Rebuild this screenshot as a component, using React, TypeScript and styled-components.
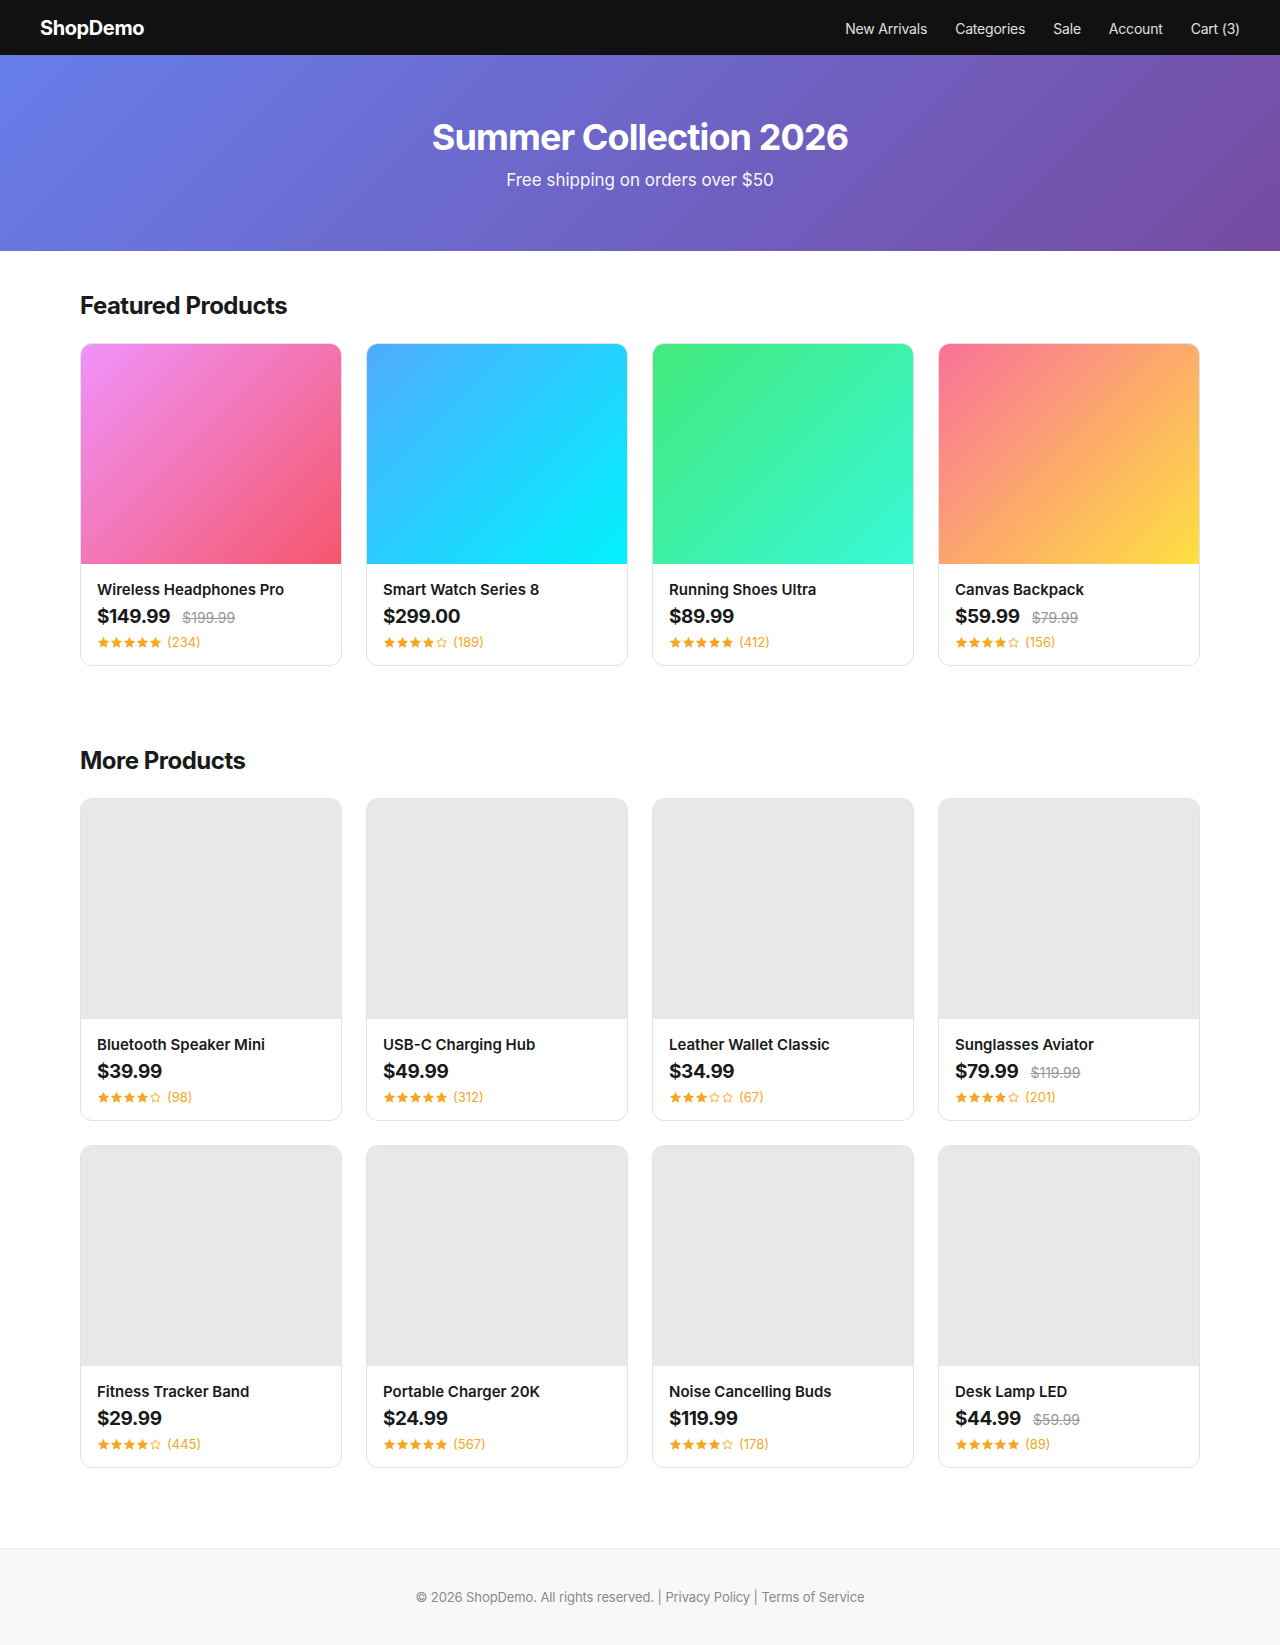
import React from 'react'
import styled, { createGlobalStyle } from 'styled-components'

const GlobalStyle = createGlobalStyle`
  * {
    box-sizing: border-box;
  }
  body {
    margin: 0;
    font-family: Inter, 'Noto Sans', 'DejaVu Sans', sans-serif;
    color: #1a1a1a;
    background: #ffffff;
  }
`

interface Product {
  name: string
  price: string
  oldPrice?: string
  rating: number
  reviews: number
  gradient?: string
}

const featured: Product[] = [
  {
    name: 'Wireless Headphones Pro',
    price: '$149.99',
    oldPrice: '$199.99',
    rating: 5,
    reviews: 234,
    gradient: 'linear-gradient(135deg, #f093fb 0%, #f5576c 100%)',
  },
  {
    name: 'Smart Watch Series 8',
    price: '$299.00',
    rating: 4,
    reviews: 189,
    gradient: 'linear-gradient(135deg, #4facfe 0%, #00f2fe 100%)',
  },
  {
    name: 'Running Shoes Ultra',
    price: '$89.99',
    rating: 5,
    reviews: 412,
    gradient: 'linear-gradient(135deg, #43e97b 0%, #38f9d7 100%)',
  },
  {
    name: 'Canvas Backpack',
    price: '$59.99',
    oldPrice: '$79.99',
    rating: 4,
    reviews: 156,
    gradient: 'linear-gradient(135deg, #fa709a 0%, #fee140 100%)',
  },
]

const more: Product[] = [
  { name: 'Bluetooth Speaker Mini', price: '$39.99', rating: 4, reviews: 98 },
  { name: 'USB-C Charging Hub', price: '$49.99', rating: 5, reviews: 312 },
  { name: 'Leather Wallet Classic', price: '$34.99', rating: 3, reviews: 67 },
  { name: 'Sunglasses Aviator', price: '$79.99', oldPrice: '$119.99', rating: 4, reviews: 201 },
  { name: 'Fitness Tracker Band', price: '$29.99', rating: 4, reviews: 445 },
  { name: 'Portable Charger 20K', price: '$24.99', rating: 5, reviews: 567 },
  { name: 'Noise Cancelling Buds', price: '$119.99', rating: 4, reviews: 178 },
  { name: 'Desk Lamp LED', price: '$44.99', oldPrice: '$59.99', rating: 5, reviews: 89 },
]

const STAR_COLOR = '#f5a623'

const Header = styled.header`
  background: #111111;
  padding: 16px 40px 15px;
  display: flex;
  align-items: center;
  justify-content: space-between;
`

const Logo = styled.div`
  color: #ffffff;
  font-size: 20px;
  font-weight: 700;
  line-height: 24px;
  letter-spacing: -0.4px;
`

const Nav = styled.nav`
  display: flex;
  gap: 28px;
  padding-top: 1px;
`

const NavLink = styled.a`
  color: #e0e0e0;
  font-size: 14px;
  letter-spacing: -0.2px;
  text-decoration: none;
`

const Hero = styled.section`
  background: linear-gradient(135deg, #667eea 0%, #764ba2 100%);
  padding: 61px 20px 58px;
  text-align: center;
  color: #ffffff;
`

const HeroTitle = styled.h1`
  margin: 0 0 8px;
  font-size: 36px;
  line-height: 1.2;
  font-weight: 700;
  letter-spacing: -0.9px;
`

const HeroSubtitle = styled.p`
  margin: 0;
  font-size: 17px;
  line-height: 26px;
  opacity: 0.95;
`

const Main = styled.main`
  max-width: 1200px;
  margin: 0 auto;
  padding: 0 40px 40px;
`

const Section = styled.section`
  padding: 40px 0;
`

const SectionTitle = styled.h2`
  margin: 0 0 22px;
  font-size: 24px;
  line-height: 30px;
  font-weight: 700;
  letter-spacing: -0.5px;
  color: #1a1a1a;
`

const Grid = styled.div`
  display: grid;
  grid-template-columns: repeat(4, 1fr);
  gap: 24px;
`

const Card = styled.div`
  border: 1px solid #e3e3e3;
  border-radius: 12px;
  overflow: hidden;
  background: #ffffff;
`

const CardImage = styled.div<{ $bg?: string }>`
  height: 220px;
  background: ${(p) => p.$bg || '#e8e8e8'};
`

const CardBody = styled.div`
  padding: 17px 16px 15px;
`

const ProductName = styled.div`
  font-size: 15px;
  font-weight: 600;
  line-height: 18px;
  color: #1a1a1a;
  margin-bottom: 6px;
`

const PriceRow = styled.div`
  display: flex;
  align-items: baseline;
  gap: 12px;
  height: 24px;
  line-height: 24px;
  margin-bottom: 5px;
`

const Price = styled.span`
  font-size: 19px;
  font-weight: 700;
  letter-spacing: -0.4px;
  color: #1a1a1a;
`

const OldPrice = styled.span`
  font-size: 14px;
  color: #999999;
  text-decoration: line-through;
`

const Rating = styled.div`
  display: flex;
  align-items: center;
  height: 16px;
  font-size: 13px;
  line-height: 16px;
  color: ${STAR_COLOR};
`

const Stars = styled.span`
  display: flex;
  align-items: center;
  margin-right: 5px;
`

const StarBox = styled.span`
  display: flex;
  width: 13px;
  height: 13px;
  align-items: center;
  justify-content: center;
`

const Footer = styled.footer`
  background: #f8f8f8;
  border-top: 1px solid #eeeeee;
  padding: 40px 20px;
  text-align: center;
  font-size: 13px;
  line-height: 17px;
  letter-spacing: -0.1px;
  color: #888888;
`

const FooterLink = styled.a`
  color: #888888;
  text-decoration: none;
`

const STAR_POINTS = '12,1.5 15.2,8.1 22.5,9.1 17.2,14.2 18.5,21.5 12,18 5.5,21.5 6.8,14.2 1.5,9.1 8.8,8.1'

const Star: React.FC<{ filled: boolean }> = ({ filled }) => (
  <StarBox>
    {filled ? (
      <svg width="13" height="13" viewBox="0 0 24 24">
        <polygon points={STAR_POINTS} fill={STAR_COLOR} />
      </svg>
    ) : (
      <svg width="11" height="11" viewBox="0 0 24 24">
        <polygon points={STAR_POINTS} fill="none" stroke={STAR_COLOR} strokeWidth="2" strokeLinejoin="round" />
      </svg>
    )}
  </StarBox>
)

const ProductCard: React.FC<{ product: Product }> = ({ product }) => (
  <Card>
    <CardImage $bg={product.gradient} />
    <CardBody>
      <ProductName>{product.name}</ProductName>
      <PriceRow>
        <Price>{product.price}</Price>
        {product.oldPrice && <OldPrice>{product.oldPrice}</OldPrice>}
      </PriceRow>
      <Rating>
        <Stars>
          {[0, 1, 2, 3, 4].map((i) => (
            <Star key={i} filled={i < product.rating} />
          ))}
        </Stars>
        ({product.reviews})
      </Rating>
    </CardBody>
  </Card>
)

export default function App() {
  return (
    <>
      <GlobalStyle />
      <Header>
        <Logo>ShopDemo</Logo>
        <Nav>
          <NavLink href="#">New Arrivals</NavLink>
          <NavLink href="#">Categories</NavLink>
          <NavLink href="#">Sale</NavLink>
          <NavLink href="#">Account</NavLink>
          <NavLink href="#">Cart (3)</NavLink>
        </Nav>
      </Header>
      <Hero>
        <HeroTitle>Summer Collection 2026</HeroTitle>
        <HeroSubtitle>Free shipping on orders over $50</HeroSubtitle>
      </Hero>
      <Main>
        <Section>
          <SectionTitle>Featured Products</SectionTitle>
          <Grid>
            {featured.map((p) => (
              <ProductCard key={p.name} product={p} />
            ))}
          </Grid>
        </Section>
        <Section>
          <SectionTitle>More Products</SectionTitle>
          <Grid>
            {more.map((p) => (
              <ProductCard key={p.name} product={p} />
            ))}
          </Grid>
        </Section>
      </Main>
      <Footer>
        © 2026 ShopDemo. All rights reserved. | <FooterLink href="#">Privacy Policy</FooterLink> |{' '}
        <FooterLink href="#">Terms of Service</FooterLink>
      </Footer>
    </>
  )
}
